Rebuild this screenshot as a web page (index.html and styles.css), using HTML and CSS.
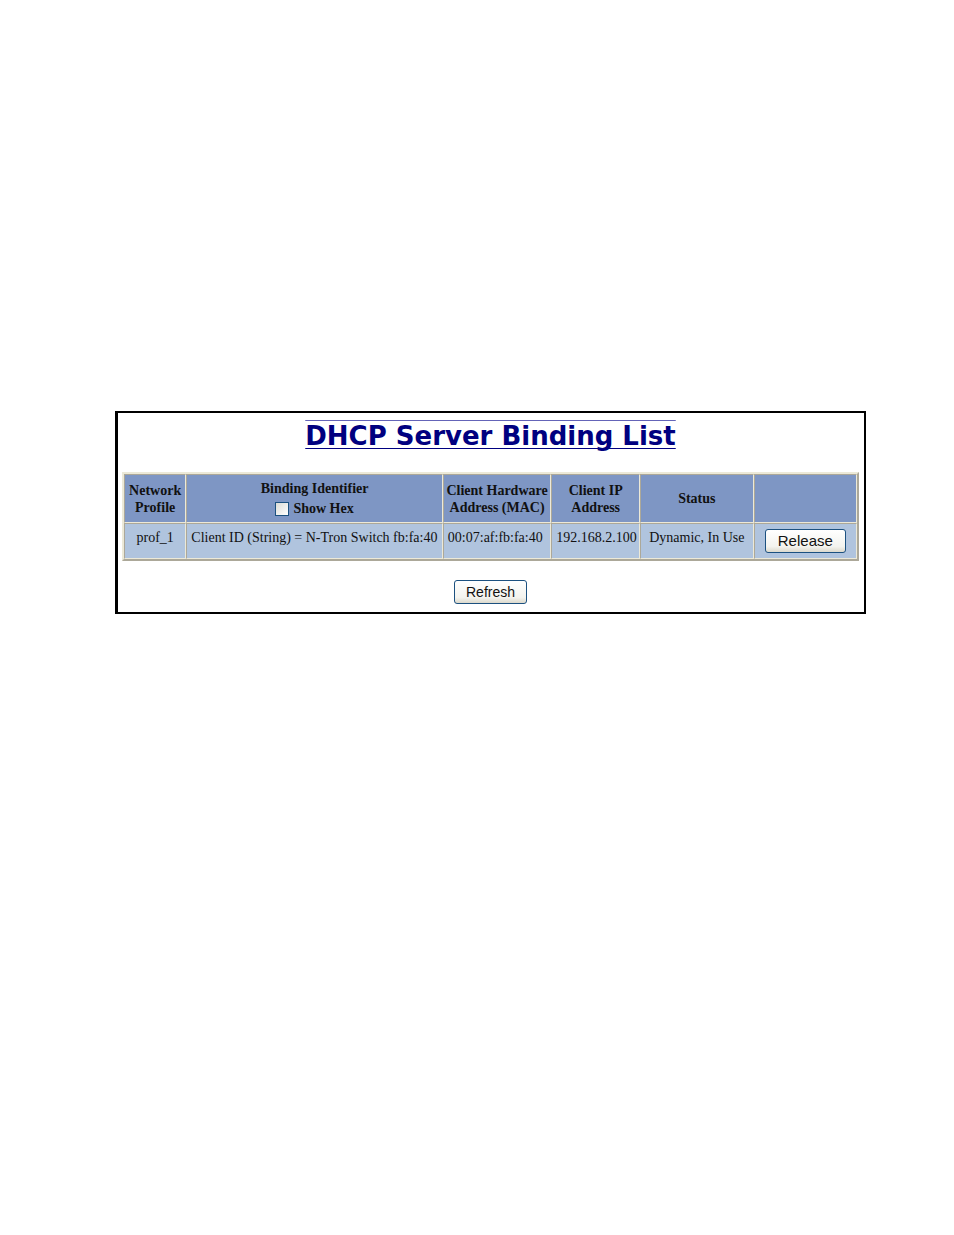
FILE: index.html
```
<!DOCTYPE html>
<html lang="en">
<head>
    <meta charset="UTF-8">
    <meta name="viewport" content="width=device-width, initial-scale=1.0">
    <title>DHCP Server Binding List</title>
    <link rel="stylesheet" href="styles.css">
</head>
<body>
    <main class="panel">
        <h1 class="title"><span class="title-text">DHCP Server Binding List</span></h1>

        <table class="bindings">
            <colgroup>
                <col class="col-profile">
                <col class="col-identifier">
                <col class="col-mac">
                <col class="col-ip">
                <col class="col-status">
                <col class="col-action">
            </colgroup>
            <thead>
                <tr>
                    <th scope="col">Network Profile</th>
                    <th scope="col">
                        Binding Identifier
                        <label class="show-hex"><input type="checkbox" class="checkbox"> Show Hex</label>
                    </th>
                    <th scope="col">Client Hardware<br>Address (MAC)</th>
                    <th scope="col">Client IP<br>Address</th>
                    <th scope="col">Status</th>
                    <td></td>
                </tr>
            </thead>
            <tbody>
                <tr>
                    <td class="center">prof_1</td>
                    <td>Client ID (String) = N-Tron Switch fb:fa:40</td>
                    <td>00:07:af:fb:fa:40</td>
                    <td>192.168.2.100</td>
                    <td class="center">Dynamic, In Use</td>
                    <td class="center"><button type="button" class="button release">Release</button></td>
                </tr>
            </tbody>
        </table>

        <button type="button" class="button">Refresh</button>
    </main>
</body>
</html>
```
FILE: styles.css
```
body {
    margin: 0;
    padding: 411px 88px 0 115px;
    background: #fff;
    color: #111;
    font-family: "Liberation Serif", "Times New Roman", serif;
    font-size: 14px;
    line-height: 17px;
}
.panel {
    display: flex;
    flex-direction: column;
    align-items: center;
    padding: 7px 5px 8px 4px;
    border: 2px solid #000;
    border-left-width: 3px;
}
.title {
    margin: 0 0 19px;
    color: #000080;
    font-family: "DejaVu Sans", Verdana, sans-serif;
    font-size: 26px;
    font-weight: bold;
    line-height: 33px;
    text-decoration: overline 1px #6464b8;
}
.title-text {
    text-decoration: underline 1px #000080;
    text-decoration-skip-ink: none;
    text-underline-offset: 3px;
}
.bindings {
    width: 100%;
    margin-bottom: 19px;
    table-layout: fixed;
    border-spacing: 0;
    border: 2px solid;
    border-color: #ece9d8 #aca899 #aca899 #ece9d8;
    background: #b0c4de;
}
.col-profile {
    width: 8.5%;
}
.col-identifier {
    width: 35%;
}
.col-mac {
    width: 14.8%;
}
.col-ip {
    width: 12.1%;
}
.col-status {
    width: 15.5%;
}
.col-action {
    width: 14.1%;
}
.bindings th,
.bindings td {
    padding: 5px 4px;
    border: 1px solid;
    border-color: #aca899 #ece9d8 #ece9d8 #aca899;
    text-align: left;
    vertical-align: top;
}
.bindings thead th,
.bindings thead td {
    padding: 5px 2px;
    background: #7e96c4;
    text-align: center;
    vertical-align: middle;
}
.bindings .center {
    text-align: center;
}
.show-hex {
    display: flex;
    align-items: center;
    justify-content: center;
    gap: 4px;
    margin-top: 3px;
}
.checkbox {
    appearance: none;
    width: 14px;
    height: 14px;
    margin: 0;
    border: 1px solid #1c5180;
    background: linear-gradient(135deg, #dcdcd7, #fff);
}
.checkbox:checked {
    background: #21a121;
}
.button {
    height: 24px;
    padding: 0 11px;
    border: 1px solid #1c5180;
    border-radius: 3px;
    background: linear-gradient(#fff, #f3f3ee 75%, #dcd9cc);
    color: #111;
    font-family: "Liberation Sans", Arial, sans-serif;
    font-size: 14px;
    line-height: 20px;
}
.button.release {
    padding: 0 12px;
    font-size: 15px;
}
```
